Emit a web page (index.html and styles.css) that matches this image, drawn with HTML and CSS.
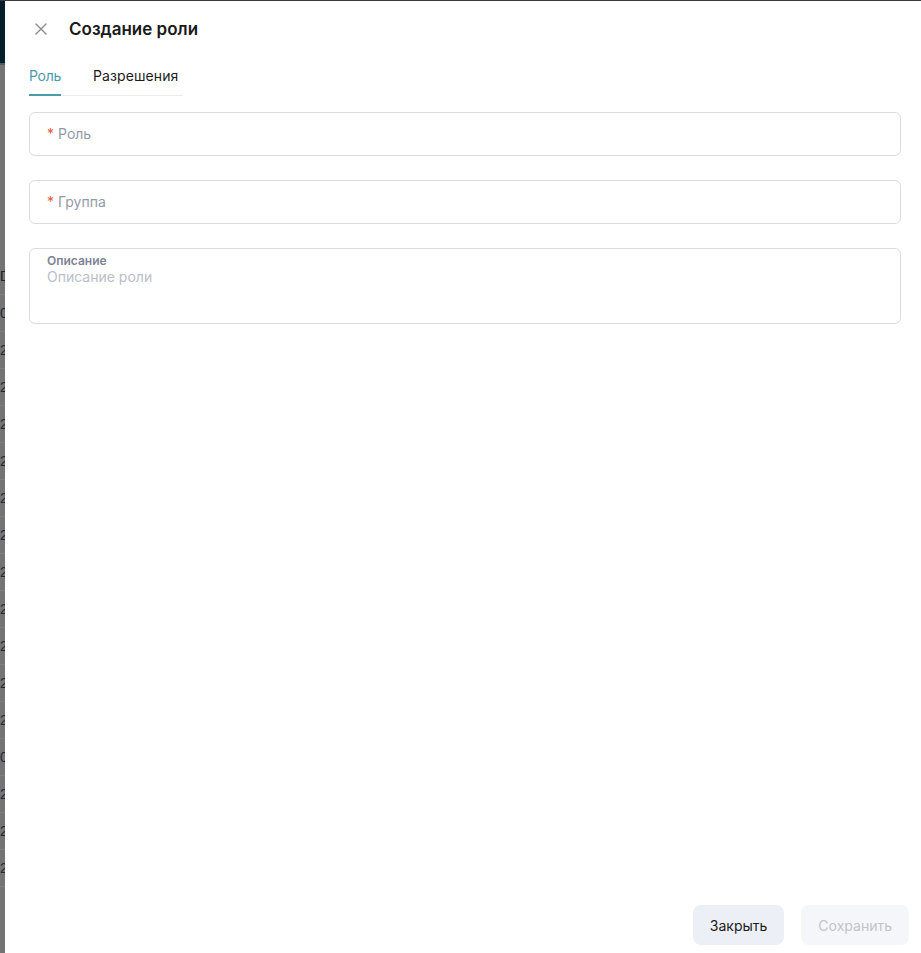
FILE: index.html
```html
<!doctype html>
<html>
    <head>
        <title>Создание роли</title>
        <meta charset="utf-8">
        <link rel="stylesheet" href="styles.css">
    </head>
    <body>
        <div id="page">
            <!-- страница под маской -->
            <div id="backdrop">
                <div class="bd-head"></div>
                <div class="bd-gap"></div>
                <div class="bd-row bd-th">D</div>
                <div class="bd-row">0</div>
                <div class="bd-row">2</div>
                <div class="bd-row">2</div>
                <div class="bd-row">2</div>
                <div class="bd-row">2</div>
                <div class="bd-row">2</div>
                <div class="bd-row">2</div>
                <div class="bd-row">2</div>
                <div class="bd-row">2</div>
                <div class="bd-row">2</div>
                <div class="bd-row">2</div>
                <div class="bd-row">2</div>
                <div class="bd-row">0</div>
                <div class="bd-row">2</div>
                <div class="bd-row">2</div>
                <div class="bd-row">2</div>
            </div>

            <!-- панель создания роли -->
            <div id="drawer">
                <div class="drawer-head">
                    <button class="close-btn" title="Закрыть">
                        <svg width="12" height="12" viewBox="0 0 12 12">
                            <path d="M1 1L11 11M11 1L1 11" stroke="#8a8a8a" stroke-width="1.4" stroke-linecap="round"/>
                        </svg>
                    </button>
                    <h1 class="drawer-title">Создание роли</h1>
                </div>

                <div class="tabs">
                    <div class="tab active">Роль</div>
                    <div class="tab">Разрешения</div>
                </div>

                <div class="form">
                    <div class="field">
                        <span class="req">*</span><span class="ph">Роль</span>
                    </div>
                    <div class="field">
                        <span class="req">*</span><span class="ph">Группа</span>
                    </div>
                    <div class="field area">
                        <div class="area-label">Описание</div>
                        <div class="area-ph">Описание роли</div>
                    </div>
                </div>

                <div class="drawer-foot">
                    <button class="btn">Закрыть</button>
                    <button class="btn btn-disabled">Сохранить</button>
                </div>
            </div>
        </div>
    </body>
</html>
```

FILE: styles.css
```css
*{margin:0;padding:0;box-sizing:border-box;}
body{
    font-family:Inter,"Noto Sans",sans-serif;
    background:#fff;
    color:#1c1c1e;
}
#page{
    display:flex;
    height:953px;
    border-top:1px solid #3a3a3a;
    overflow:hidden;
}
#backdrop{
    width:5px;
    flex-shrink:0;
    overflow:hidden;
    background:#747474;
    font-family:"Liberation Sans",sans-serif;
}
.bd-head{
    height:64px;
    background:#03202a;
    border-bottom:2px solid #4b5d66;
}
.bd-gap{height:193px;}
.bd-row{
    height:37px;
    line-height:37px;
    font-size:14px;
    color:#1d2a3a;
    border-bottom:1px solid #7f7f7f;
    white-space:nowrap;
}
.bd-th{color:#222;}
#drawer{
    flex:1;
    display:flex;
    flex-direction:column;
    background:#fff;
}
.drawer-head{
    display:flex;
    align-items:center;
    height:54px;
    padding-left:30px;
    padding-top:1px;
}
.close-btn{
    width:12px;
    height:12px;
    border:none;
    background:none;
    display:flex;
    margin-right:22px;
    cursor:pointer;
}
.drawer-title{
    font-size:17px;
    font-weight:600;
    color:#1a1a1a;
}
.tabs{
    display:flex;
    gap:32px;
    align-self:flex-start;
    margin-left:24px;
    margin-top:6px;
    padding-right:5px;
    border-bottom:1px solid #ececf0;
}
.tab{
    font-size:14px;
    line-height:20px;
    padding:5px 0 8px;
    color:#1c1c1e;
    border-bottom:2px solid transparent;
    margin-bottom:-1px;
    letter-spacing:0.1px;
}
.tab.active{
    color:#4a9cab;
    border-bottom-color:#4a9cab;
    letter-spacing:-0.3px;
}
.form{
    display:flex;
    flex-direction:column;
    gap:24px;
    margin:16px 20px 0 24px;
}
.field{
    height:44px;
    border:1px solid #d9dce4;
    border-radius:6px;
    display:flex;
    align-items:center;
    padding-left:17px;
    padding-bottom:2px;
    font-size:14px;
}
.req{
    color:#e8553e;
    margin-right:4px;
}
.ph{color:#959aa8;}
.field.area{
    height:76px;
    flex-direction:column;
    align-items:flex-start;
    padding-top:4px;
}
.area-label{
    font-size:12px;
    font-weight:600;
    line-height:16px;
    color:#7d8395;
}
.area-ph{
    font-size:14px;
    line-height:16px;
    color:#babec8;
}
.drawer-foot{
    margin-top:auto;
    display:flex;
    justify-content:flex-end;
    gap:17px;
    padding:0 12px 8px 0;
}
.btn{
    height:40px;
    padding:0 17px;
    border:none;
    border-radius:8px;
    background:#eceff5;
    font-family:inherit;
    font-size:14px;
    color:#1c1c1e;
    cursor:pointer;
}
.btn-disabled{
    background:#f5f6f9;
    color:#c0c4cc;
    cursor:default;
}
```
